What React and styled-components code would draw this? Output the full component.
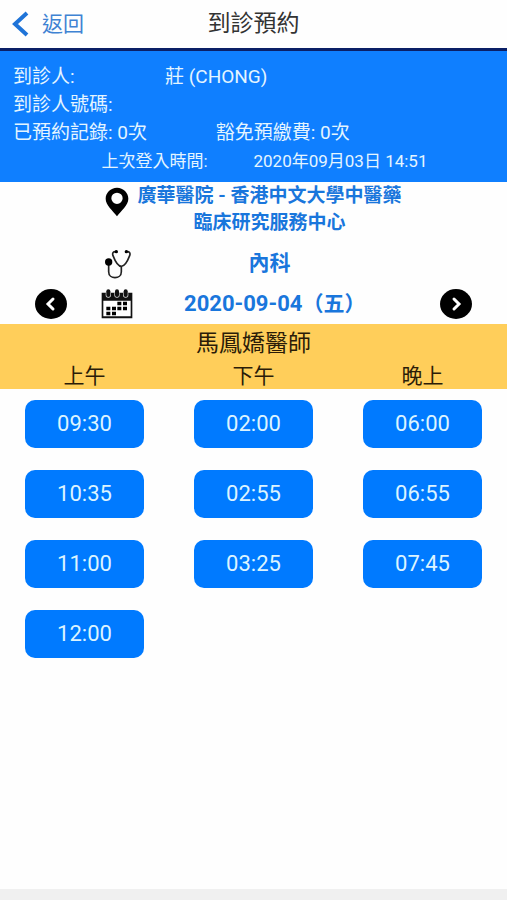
import React from "react";
import styled, { createGlobalStyle } from "styled-components";

const periods = ["上午", "下午", "晚上"];

const slotRows = [
  ["09:30", "02:00", "06:00"],
  ["10:35", "02:55", "06:55"],
  ["11:00", "03:25", "07:45"],
  ["12:00", null, null],
];

const PinIcon = () => (
  <svg width="24" height="30" viewBox="0 0 72 90" aria-hidden="true">
    <path
      fill="#000"
      fillRule="evenodd"
      d="M36 2C17 2 2 17 2 35c0 20 22 36 34 53 12-17 34-33 34-53C70 17 55 2 36 2zm0 15a17 17 0 1 1 0 34 17 17 0 0 1 0-34z"
    />
  </svg>
);

const StethoscopeIcon = () => (
  <svg width="30" height="31" viewBox="12 11 90 93" aria-hidden="true">
    <g fill="none" stroke="#222" strokeWidth="5" strokeLinecap="round">
      <path d="M54 22c-8-1-12 4-9 12 5 13 14 32 25 32s20-19 25-32c3-8-1-13-9-12" />
      <path d="M32 56v26c0 24 38 24 38 0V68" />
    </g>
    <circle cx="32" cy="53" r="11" fill="#000" />
    <circle cx="55" cy="22" r="5" fill="#000" />
    <circle cx="85" cy="22" r="5" fill="#000" />
  </svg>
);

const CalendarIcon = () => (
  <svg width="32" height="30" viewBox="35 161 96 90" aria-hidden="true">
    <path
      fill="#111"
      fillRule="evenodd"
      d="M37 172h92v77H37zM42 196v47h82v-47z"
    />
    {[57, 83, 109].map((x) => (
      <g key={x}>
        <rect x={x - 8} y="168" width="16" height="19" rx="8" fill="#ddd" />
        <rect x={x - 6} y="162" width="12" height="23" rx="6" fill="#111" />
      </g>
    ))}
    <path
      fill="#000"
      d="M84 199h12v11H84zM101 199h12v11h-12zM51 214h12v11H51zM68 214h12v11H68zM84 214h12v11H84zM101 214h12v11h-12zM51 229h12v11H51zM68 229h12v11H68z"
    />
  </svg>
);

const App = () => {
  return (
    <Page>
      <GlobalStyle />
      <Header>
        <BackButton type="button">
          <svg width="17" height="26" viewBox="0 0 17 26" aria-hidden="true">
            <path
              d="M15 2L3 13l12 11"
              fill="none"
              stroke="#1f74d8"
              strokeWidth="4"
            />
          </svg>
          返回
        </BackButton>
        <Title>到診預約</Title>
      </Header>

      <Patient>
        <InfoRow $columns="30% 1fr">
          <InfoCell>到診人:</InfoCell>
          <InfoCell>莊 (CHONG)</InfoCell>
        </InfoRow>
        <InfoRow $columns="1fr">
          <InfoCell>到診人號碼:</InfoCell>
        </InfoRow>
        <InfoRow $columns="40% 1fr">
          <InfoCell>已預約記錄: 0次</InfoCell>
          <InfoCell>豁免預繳費: 0次</InfoCell>
        </InfoRow>
        <LoginRow $columns="3fr 5fr">
          <span>上次登入時間:</span>
          <span>2020年09月03日 14:51</span>
        </LoginRow>
      </Patient>

      <Main>
        <PickerRow $height={60}>
          <PinCell>
            <PinIcon />
          </PinCell>
          <Clinic>
            廣華醫院 - 香港中文大學中醫藥
            <br />
            臨床研究服務中心
          </Clinic>
        </PickerRow>
        <PickerRow $height={42} $center>
          <IconCell>
            <StethoscopeIcon />
          </IconCell>
          <Department>內科</Department>
        </PickerRow>
        <PickerRow $height={40} $center>
          <ArrowButton type="button" aria-label="前一天">
            <svg width="12" height="16" viewBox="0 0 12 16" aria-hidden="true">
              <path d="M8 3L3 8l5 5" />
            </svg>
          </ArrowButton>
          <IconCell>
            <CalendarIcon />
          </IconCell>
          <DateText>
            2020-09-04<Weekday>（五）</Weekday>
          </DateText>
          <ArrowButton type="button" aria-label="後一天">
            <svg width="12" height="16" viewBox="0 0 12 16" aria-hidden="true">
              <path d="M4 3l5 5-5 5" />
            </svg>
          </ArrowButton>
        </PickerRow>

        <Schedule>
          <thead>
            <tr>
              <Doctor colSpan={3}>馬鳳嬌醫師</Doctor>
            </tr>
            <tr>
              {periods.map((period) => (
                <Period key={period} scope="col">
                  {period}
                </Period>
              ))}
            </tr>
          </thead>
          <tbody>
            {slotRows.map((row, i) => (
              <tr key={i}>
                {row.map((time, j) => (
                  <SlotCell key={j}>
                    {time && <Slot type="button">{time}</Slot>}
                  </SlotCell>
                ))}
              </tr>
            ))}
          </tbody>
        </Schedule>
      </Main>
      <BottomBar />
    </Page>
  );
};

export default App;

const GlobalStyle = createGlobalStyle`
  * {
    box-sizing: border-box;
  }

  body {
    margin: 0;
    background: #fefefe;
    font-family: Roboto, "Noto Sans CJK TC", sans-serif;
  }

  button {
    font-family: inherit;
    border: none;
    padding: 0;
    cursor: pointer;
  }
`;

const Page = styled.div`
  display: flex;
  flex-direction: column;
  min-height: 100vh;
`;
const Header = styled.header`
  display: grid;
  grid-template-columns: 1fr auto 1fr;
  align-items: center;
  height: 51px;
  padding: 0 12px;
  border-bottom: 3px solid #0a1f66;
`;
const BackButton = styled.button`
  display: flex;
  align-items: center;
  gap: 13px;
  justify-self: start;
  background: none;
  color: #3f83d3;
  font-size: 21px;
  line-height: 28px;
`;
const Title = styled.h1`
  margin: 0;
  color: #333;
  font-size: 23px;
  font-weight: 400;
  line-height: 28px;
`;
const Patient = styled.section`
  padding: 12px 0 7px;
  background: #0f7fff;
  color: #e4f5ff;
`;
const InfoRow = styled.div`
  display: grid;
  grid-template-columns: ${(props) => props.$columns};
  font-size: 19px;
  line-height: 28px;
  white-space: nowrap;
`;
const InfoCell = styled.span`
  padding-left: 13px;
`;
const LoginRow = styled(InfoRow)`
  margin-left: 20%;
  font-size: 17px;
`;
const Main = styled.main`
  flex: 1;
`;
const PickerRow = styled.div`
  display: grid;
  grid-template-columns: 20% 32px 1fr 20%;
  align-items: ${(props) => (props.$center ? "center" : "start")};
  min-height: ${(props) => props.$height}px;
`;
const IconCell = styled.div`
  grid-column: 2;
  display: flex;
  justify-content: center;
`;
const PinCell = styled(IconCell)`
  padding-top: 5px;
`;
const Clinic = styled.h2`
  margin: 0;
  color: #1976dc;
  font-size: 19px;
  font-weight: 700;
  line-height: 27px;
  text-align: center;
  white-space: nowrap;
`;
const Department = styled.p`
  margin: 0;
  color: #1976dc;
  font-size: 21px;
  font-weight: 700;
  line-height: 28px;
  text-align: center;
`;
const DateText = styled(Department)`
  font-size: 22px;
  white-space: nowrap;
`;
// the closing bracket is blank on its right half, leave that out of the centring
const Weekday = styled.span`
  margin-right: -0.5em;
  font-size: 21px;
`;
const ArrowButton = styled.button`
  display: grid;
  place-items: center;
  justify-self: center;
  width: 32px;
  height: 30px;
  border-radius: 50%;
  background: #000;

  path {
    fill: none;
    stroke: #fff;
    stroke-width: 3;
    stroke-linecap: round;
  }
`;
const Schedule = styled.table`
  width: 100%;
  table-layout: fixed;
  border-collapse: collapse;

  thead {
    background: #ffce5a;
    color: #2b1c08;
  }
`;
const Doctor = styled.th`
  height: 39px;
  padding: 0;
  font-size: 23px;
  font-weight: 400;
  line-height: 39px;
`;
const Period = styled.th`
  height: 26px;
  padding: 0;
  font-size: 21px;
  font-weight: 400;
  line-height: 26px;
`;
const SlotCell = styled.td`
  padding: 11px 5%;
`;
const Slot = styled.button`
  display: block;
  width: 100%;
  height: 48px;
  border-radius: 10px;
  background: #007aff;
  color: #dcf4ff;
  font-size: 22px;
  line-height: 28px;
`;
const BottomBar = styled.footer`
  height: 11px;
  background: #f0f0f0;
`;
